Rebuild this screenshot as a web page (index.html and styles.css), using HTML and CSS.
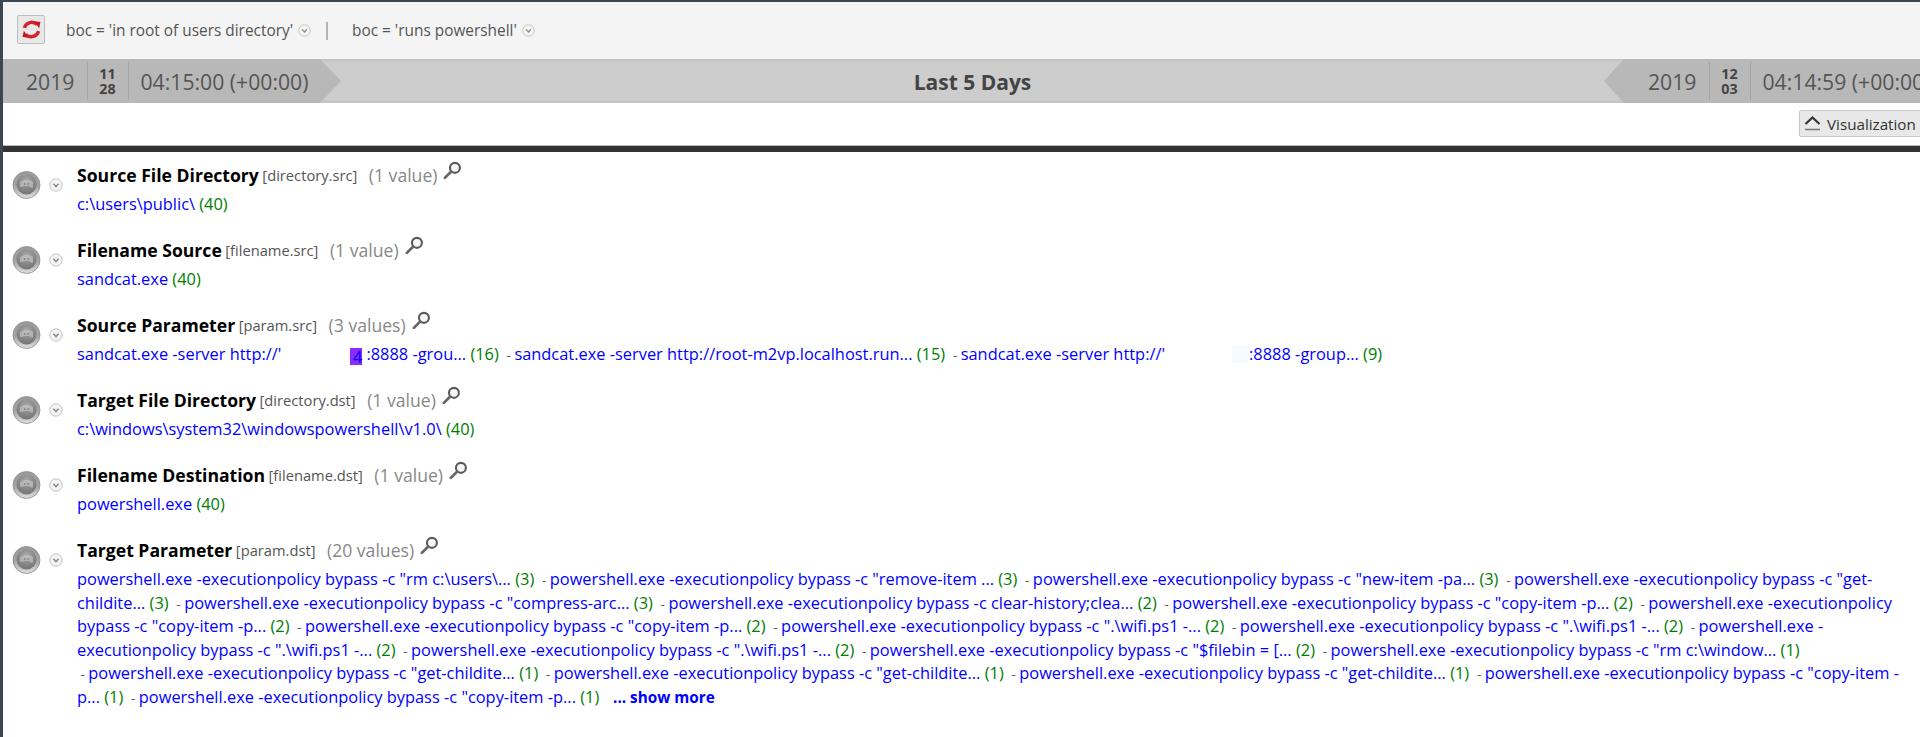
FILE: index.html
```html
<!DOCTYPE html>
<html lang="en">
<head>
<meta charset="utf-8">
<title>Investigation</title>
<link rel="stylesheet" href="styles.css">
</head>
<body>
<svg class="defs" aria-hidden="true">
  <defs>
    <radialGradient id="ball" cx="50%" cy="30%" r="75%">
      <stop offset="0" stop-color="#a8a8a8"/>
      <stop offset="0.6" stop-color="#858585"/>
      <stop offset="1" stop-color="#727272"/>
    </radialGradient>
    <linearGradient id="rim" x1="0" y1="0" x2="0" y2="1">
      <stop offset="0" stop-color="#9a9a9a"/>
      <stop offset="0.55" stop-color="#a4a4a4"/>
      <stop offset="1" stop-color="#e0e0e0"/>
    </linearGradient>
    <symbol id="ball-icon" viewBox="0 0 28 28">
      <circle cx="14" cy="14" r="13.500" fill="url(#rim)" stroke="#8c8c8c" stroke-width=".8"/>
      <circle cx="14" cy="13.500" r="10" fill="url(#ball)"/>
      <path d="M7.500 11.500c2-2 4-2.500 7-2.500 2.500 0 4.500.5 6 2v5.500c-2 .5-3-.5-4-1.500h-5c-1 1-2.500 1.500-4 .5z" fill="#c6c6c6" opacity=".65"/>
      <path d="M11.500 12h1.500v2h-1.500zM15 12h1.500v2H15z" fill="#8a8a8a"/>
    </symbol>
    <symbol id="chev" viewBox="0 0 14 14">
      <circle cx="7" cy="7" r="6.200" fill="#f4f4f4" stroke="#c2c2c2"/>
      <path d="M4.400 5.800 7 8.600l2.600-2.800" fill="none" stroke="#8a8a8a" stroke-width="1.500"/>
    </symbol>
    <symbol id="glass" viewBox="0 0 18 18">
      <circle cx="11.300" cy="6.500" r="4.700" fill="#f7f7f7" stroke="#5a5a5a" stroke-width="2"/>
      <path d="M7.800 10 1.800 16" stroke="#666" stroke-width="2.600" stroke-linecap="round"/>
    </symbol>
  </defs>
</svg>
<div class="page">
  <div class="inner">
    <header class="toolbar">
      <button class="refresh" type="button" aria-label="Refresh">
        <svg viewBox="0 0 20 20" width="21" height="21">
          <path d="M3.200 8.500A7.200 7.200 0 0 1 15.400 5.400" fill="none" stroke="#d8202a" stroke-width="3.200"/>
          <path d="M12.500 2.200l6 .6-1.200 6z" fill="#c8141e"/>
          <path d="M16.800 11.500A7.200 7.200 0 0 1 4.600 14.600" fill="none" stroke="#d8202a" stroke-width="3.200"/>
          <path d="M7.500 17.800l-6-.6 1.200-6z" fill="#c8141e"/>
        </svg>
      </button>
      <span class="crumb">boc = 'in root of users directory'</span>
      <svg class="chev-sm"><use href="#chev"/></svg>
      <span class="divider"></span>
      <span class="crumb">boc = 'runs powershell'</span>
      <svg class="chev-sm"><use href="#chev"/></svg>
    </header>

    <section class="timebar">
      <div class="stamp stamp-left">
        <span class="year">2019</span>
        <span class="md"><b>11</b><b>28</b></span>
        <span class="clock">04:15:00 (+00:00)</span>
      </div>
      <div class="range">Last 5 Days</div>
      <div class="stamp stamp-right">
        <span class="year">2019</span>
        <span class="md"><b>12</b><b>03</b></span>
        <span class="clock">04:14:59 (+00:00)</span>
      </div>
    </section>

    <div class="actions">
      <button class="viz" type="button">
        <svg viewBox="0 0 17 15" width="17" height="15">
          <path d="M1.500 8 8.500 1.500 15.500 8" fill="none" stroke="#333" stroke-width="2.200"/>
          <path d="M1 13.500h15" stroke="#777" stroke-width="1.500"/>
        </svg>
        <span>Visualization</span>
      </button>
    </div>

    <main class="rows">
      <article class="row">
        <svg class="ball"><use href="#ball-icon"/></svg>
        <svg class="chev-row"><use href="#chev"/></svg>
        <div class="body">
          <h3 class="head"><span class="name">Source File Directory</span><span class="key">[directory.src]</span><span class="count-values">(1 value)</span><svg class="glass"><use href="#glass"/></svg></h3>
          <p class="vals"><a>c:\users\public\</a> <span class="n">(40)</span></p>
        </div>
      </article>
      <article class="row">
        <svg class="ball"><use href="#ball-icon"/></svg>
        <svg class="chev-row"><use href="#chev"/></svg>
        <div class="body">
          <h3 class="head"><span class="name">Filename Source</span><span class="key">[filename.src]</span><span class="count-values">(1 value)</span><svg class="glass"><use href="#glass"/></svg></h3>
          <p class="vals"><a>sandcat.exe</a> <span class="n">(40)</span></p>
        </div>
      </article>
      <article class="row">
        <svg class="ball"><use href="#ball-icon"/></svg>
        <svg class="chev-row"><use href="#chev"/></svg>
        <div class="body">
          <h3 class="head"><span class="name">Source Parameter</span><span class="key">[param.src]</span><span class="count-values">(3 values)</span><svg class="glass"><use href="#glass"/></svg></h3>
          <p class="vals"><a>sandcat.exe -server http://'<span class="blank"></span><span class="purple">4</span>:8888 -grou...</a> <span class="n">(16)</span> <span class="sep">&nbsp;-&nbsp;</span><a>sandcat.exe -server http://root-m2vp.localhost.run...</a> <span class="n">(15)</span> <span class="sep">&nbsp;-&nbsp;</span><a>sandcat.exe -server http://'<span class="blank"></span><span class="tint"></span>:8888 -group...</a> <span class="n">(9)</span></p>
        </div>
      </article>
      <article class="row">
        <svg class="ball"><use href="#ball-icon"/></svg>
        <svg class="chev-row"><use href="#chev"/></svg>
        <div class="body">
          <h3 class="head"><span class="name">Target File Directory</span><span class="key">[directory.dst]</span><span class="count-values">(1 value)</span><svg class="glass"><use href="#glass"/></svg></h3>
          <p class="vals"><a>c:\windows\system32\windowspowershell\v1.0\</a> <span class="n">(40)</span></p>
        </div>
      </article>
      <article class="row">
        <svg class="ball"><use href="#ball-icon"/></svg>
        <svg class="chev-row"><use href="#chev"/></svg>
        <div class="body">
          <h3 class="head"><span class="name">Filename Destination</span><span class="key">[filename.dst]</span><span class="count-values">(1 value)</span><svg class="glass"><use href="#glass"/></svg></h3>
          <p class="vals"><a>powershell.exe</a> <span class="n">(40)</span></p>
        </div>
      </article>
      <article class="row">
        <svg class="ball"><use href="#ball-icon"/></svg>
        <svg class="chev-row"><use href="#chev"/></svg>
        <div class="body">
          <h3 class="head"><span class="name">Target Parameter</span><span class="key">[param.dst]</span><span class="count-values">(20 values)</span><svg class="glass"><use href="#glass"/></svg></h3>
          <p class="vals long"><a>powershell.exe -executionpolicy bypass -c "rm c:\users\...</a> <span class="n">(3)</span> <span class="sep">&nbsp;-&nbsp;</span><a>powershell.exe -executionpolicy bypass -c "remove-item ...</a> <span class="n">(3)</span> <span class="sep">&nbsp;-&nbsp;</span><a>powershell.exe -executionpolicy bypass -c "new-item -pa...</a> <span class="n">(3)</span> <span class="sep">&nbsp;-&nbsp;</span><a>powershell.exe -executionpolicy bypass -c "get-childite...</a> <span class="n">(3)</span> <span class="sep">&nbsp;-&nbsp;</span><a>powershell.exe -executionpolicy bypass -c "compress-arc...</a> <span class="n">(3)</span> <span class="sep">&nbsp;-&nbsp;</span><a>powershell.exe -executionpolicy bypass -c clear-history;clea...</a> <span class="n">(2)</span> <span class="sep">&nbsp;-&nbsp;</span><a>powershell.exe -executionpolicy bypass -c "copy-item -p...</a> <span class="n">(2)</span> <span class="sep">&nbsp;-&nbsp;</span><a>powershell.exe -executionpolicy bypass -c "copy-item -p...</a> <span class="n">(2)</span> <span class="sep">&nbsp;-&nbsp;</span><a>powershell.exe -executionpolicy bypass -c "copy-item -p...</a> <span class="n">(2)</span> <span class="sep">&nbsp;-&nbsp;</span><a>powershell.exe -executionpolicy bypass -c ".\wifi.ps1 -...</a> <span class="n">(2)</span> <span class="sep">&nbsp;-&nbsp;</span><a>powershell.exe -executionpolicy bypass -c ".\wifi.ps1 -...</a> <span class="n">(2)</span> <span class="sep">&nbsp;-&nbsp;</span><a>powershell.exe -executionpolicy bypass -c ".\wifi.ps1 -...</a> <span class="n">(2)</span> <span class="sep">&nbsp;-&nbsp;</span><a>powershell.exe -executionpolicy bypass -c ".\wifi.ps1 -...</a> <span class="n">(2)</span> <span class="sep">&nbsp;-&nbsp;</span><a>powershell.exe -executionpolicy bypass -c "$filebin = [...</a> <span class="n">(2)</span> <span class="sep">&nbsp;-&nbsp;</span><a>powershell.exe -executionpolicy bypass -c "rm c:\window...</a> <span class="n">(1)</span> <span class="keep"><span class="sep">&nbsp;-&nbsp;</span><a>powershell.exe</a></span><a> -executionpolicy bypass -c "get-childite...</a> <span class="n">(1)</span> <span class="sep">&nbsp;-&nbsp;</span><a>powershell.exe -executionpolicy bypass -c "get-childite...</a> <span class="n">(1)</span> <span class="sep">&nbsp;-&nbsp;</span><a>powershell.exe -executionpolicy bypass -c "get-childite...</a> <span class="n">(1)</span> <span class="sep">&nbsp;-&nbsp;</span><a>powershell.exe -executionpolicy bypass -c "copy-item -p...</a> <span class="n">(1)</span> <span class="sep">&nbsp;-&nbsp;</span><a>powershell.exe -executionpolicy bypass -c "copy-item -p...</a> <span class="n">(1)</span> <a class="more">... show more</a></p>
        </div>
      </article>
    </main>
  </div>
</div>
</body>
</html>
```
FILE: styles.css
```css
* { box-sizing: border-box; }
html, body { margin: 0; padding: 0; background: #fff; }
body { font-family: "Open Sans", "Noto Sans", sans-serif; }
.defs { width: 0; height: 0; overflow: hidden; display: block; }
.page { width: 1920px; height: 737px; overflow: hidden; border-left: 3px solid #3a4650; border-top: 2px solid #3a4650; }
.inner { width: 1938px; }

.toolbar { height: 57px; background: #f4f4f4; display: flex; align-items: center; padding: 0 0 0 14px; }
.refresh { width: 28px; height: 29px; margin: 0 21px 2px 0; padding: 0; background: #e8e8e8; border: 1px solid #bdbdbd; border-radius: 2px; display: flex; align-items: center; justify-content: center; }
.crumb { font-size: 15.400px; color: #555; }
.chev-sm { width: 13px; height: 13px; margin-left: 5px; }
.divider { width: 2px; height: 18px; margin: 0 24px 0 15px; background: #b4b4b4; }

.timebar { height: 44px; background: #cdcdcd; border-top: 2px solid #c4c4c4; border-bottom: 2px solid #c4c4c4; display: flex; align-items: stretch; }
.stamp { display: flex; align-items: center; background: #b8b8b8; flex: 0 0 338px; color: #555; margin: -2px 0; padding: 3px 0; }
.stamp-left { padding-left: 23px; clip-path: polygon(0 0, 317px 0, 338px 50%, 317px 100%, 0 100%); }
.stamp-right { flex-basis: 337px; padding-left: 44px; clip-path: polygon(20px 0, 100% 0, 100% 100%, 20px 100%, 0 50%); }
.year { font-size: 21.200px; width: 60.500px; flex: none; }
.md { width: 42px; height: 100%; flex: none; display: flex; flex-direction: column; align-items: center; justify-content: center; border-left: 1px solid #a4a4a4; border-right: 1px solid #a4a4a4; font-size: 14.300px; line-height: 15px; color: #444; }
.md b { display: block; }
.clock { font-size: 21.200px; margin-left: 12px; white-space: nowrap; }
.range { flex: 1; text-align: center; font-size: 21px; font-weight: 700; color: #444; line-height: 42px; }

.actions { height: 43px; display: flex; justify-content: flex-end; padding-top: 7px; border-bottom: 1px solid #bbb; }
.viz { height: 27px; width: 142px; padding: 0 0 0 4px; background: #e8e8e8; border: 1px solid #c8c8c8; border-radius: 2px 0 0 2px; display: flex; align-items: center; gap: 6px; font: 15.200px "Open Sans", sans-serif; color: #333; }

.rows { border-top: 6px solid #333; padding: 11px 40px 0 0; }
.row { display: flex; height: 75px; }
.row:last-child { height: auto; }
.ball { width: 29px; height: 28px; margin: 8px 0 0 9px; flex: none; }
.chev-row { width: 14px; height: 14px; margin: 15px 0 0 8px; flex: none; }
.body { margin-left: 14px; min-width: 0; flex: 1; }
.head { margin: 0; font-weight: 400; display: flex; align-items: flex-end; height: 24px; line-height: 24px; white-space: pre; }
.name { font-size: 17.600px; font-weight: 700; color: #000; }
.key { font-size: 14.700px; color: #555; margin-left: 3.500px; }
.count-values { font-size: 17.600px; color: #888; margin-left: 11.500px; }
.glass { width: 19px; height: 19px; margin: 0 0 7px 6px; }
.vals { margin: 5px 0 0; font-size: 16.400px; line-height: 23.500px; color: #333; }
.vals a { color: #00f; }
.n { color: #007d00; }
.sep { color: #555; font-size: 13.400px; line-height: 0; }
.keep { white-space: nowrap; }
.more { font-weight: 700; font-size: 15.300px; margin-left: 9.500px; }
.blank { display: inline-block; width: 69px; }
.purple { display: inline-block; width: 12px; height: 17px; line-height: 17px; margin-right: 4px; background: #8a2bff; text-align: right; vertical-align: -3px; }
.tint { display: inline-block; width: 16px; height: 17px; margin: 0 1px 0 -2px; background: #f5fbff; vertical-align: -3px; }
```
